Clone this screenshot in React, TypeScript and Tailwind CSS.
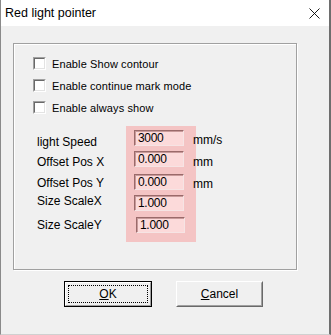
const FONT = "font-['Liberation_Sans',Arial,sans-serif]";

function CheckRow({ label }: { label: string }) {
  return (
    <div className="flex items-center h-[13px]">
      <div className="w-[13px] h-[13px] border border-t-[#a0a0a0] border-l-[#a0a0a0] border-b-white border-r-white">
        <div className="w-full h-full bg-white border border-t-[#696969] border-l-[#696969] border-b-[#e3e3e3] border-r-[#e3e3e3]" />
      </div>
      <span className="ml-[6px] text-[11px] leading-[14px] tracking-[0.1px] text-black">{label}</span>
    </div>
  );
}

function PinkInput({ value, className = '' }: { value: string; className?: string }) {
  return (
    <div
      className={`h-[16px] bg-[#fcdada] border border-t-[#9a6a6a] border-l-[#9a6a6a] border-b-[#f6e4e4] border-r-[#f6e4e4] shadow-[inset_1px_1px_0_#c89a9a] pl-[3px] text-[12px] leading-[14px] tracking-[-0.3px] text-black ${className}`}
    >
      {value}
    </div>
  );
}

export default function App() {
  return (
    <div className={`w-[331px] h-[335px] flex flex-col bg-[#f0f0f0] border-l border-r-2 border-b border-l-[#8a8a8a] border-r-[#6e6e6e] border-b-[#d0d0d0] ${FONT}`}>
      <div className="h-[26px] bg-white flex items-center justify-between pl-[4px] pr-[9px]">
        <span className="text-[12.5px] text-black">Red light pointer</span>
        <svg width="11" height="11" viewBox="0 0 11 11" stroke="#000" strokeWidth="0.9">
          <line x1="0.5" y1="0.5" x2="10.5" y2="10.5" />
          <line x1="10.5" y1="0.5" x2="0.5" y2="10.5" />
        </svg>
      </div>

      <div className="pt-[17px] pl-[12px]">
        <div className="w-[284px] h-[227px] border border-[#a0a0a0] shadow-[inset_1px_1px_0_#fff,1px_1px_0_#fff]">
          <div className="pl-[19px] pt-[13px] flex flex-col gap-[9px]">
            <CheckRow label="Enable Show contour" />
            <CheckRow label="Enable continue mark mode" />
            <CheckRow label="Enable always show" />
          </div>

          <div className="flex mt-[12px] pl-[23px] text-[12px] leading-[14px] text-black">
            <div className="w-[89px] flex flex-col">
              <span className="mt-[9px]">light Speed</span>
              <span className="mt-[6px]">Offset Pos X</span>
              <span className="mt-[7px]">Offset Pos Y</span>
              <span className="mt-[4px]">Size ScaleX</span>
              <span className="mt-[10px]">Size ScaleY</span>
            </div>
            <div className="w-[70px] h-[116px] bg-[#f4c4c4] flex flex-col pl-[8px] pt-[4px]">
              <PinkInput value="3000" className="w-[50px]" />
              <PinkInput value="0.000" className="w-[50px] mt-[5px]" />
              <PinkInput value="0.000" className="w-[50px] mt-[7px]" />
              <PinkInput value="1.000" className="w-[50px] mt-[5px]" />
              <PinkInput value="1.000" className="w-[49px] mt-[6px] ml-[2px]" />
            </div>
            <div className="flex flex-col -ml-[3px]">
              <span className="mt-[7px]">mm/s</span>
              <span className="mt-[8px]">mm</span>
              <span className="mt-[8px]">mm</span>
            </div>
          </div>
        </div>
      </div>

      <div className="flex gap-[24px] pl-[63px] mt-[11px] text-[12px] text-black">
        <button className="w-[88px] h-[26px] border border-black bg-[#f0f0f0] p-0">
          <div className="w-full h-full border border-t-white border-l-white border-b-[#a0a0a0] border-r-[#a0a0a0] p-[2px]">
            <div className="w-full h-full border border-dotted border-black flex items-center justify-center">
              <span><span className="underline">O</span>K</span>
            </div>
          </div>
        </button>
        <button className="w-[87px] h-[26px] border border-t-white border-l-white border-b-[#696969] border-r-[#696969] bg-[#f0f0f0] p-0">
          <div className="w-full h-full border border-t-[#f0f0f0] border-l-[#f0f0f0] border-b-[#a0a0a0] border-r-[#a0a0a0] flex items-center justify-center">
            <span><span className="underline">C</span>ancel</span>
          </div>
        </button>
      </div>
    </div>
  );
}
